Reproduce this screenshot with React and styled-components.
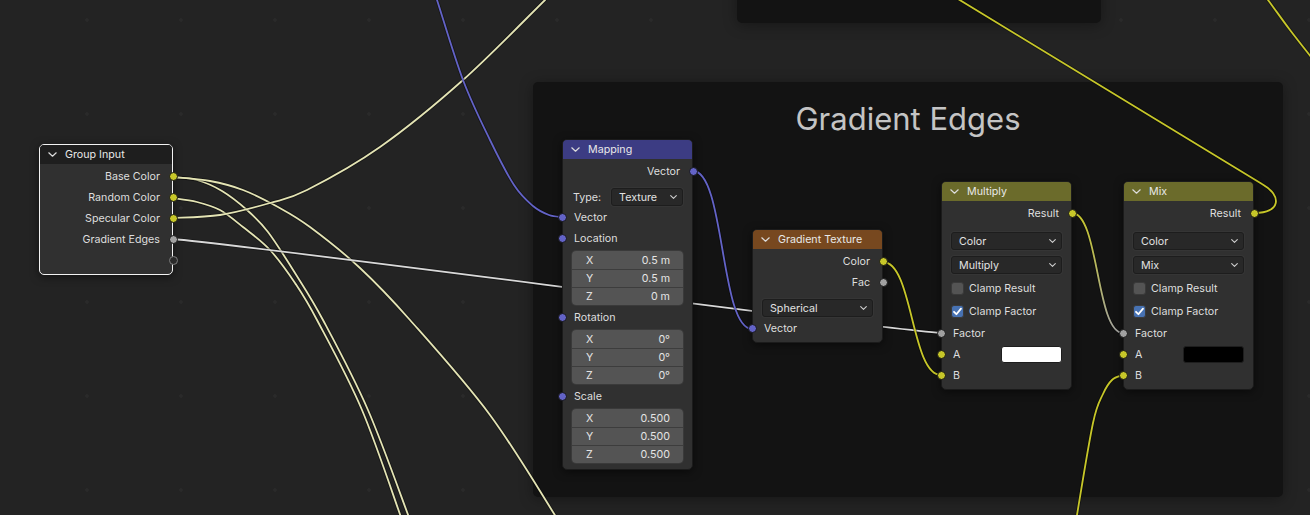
import React from "react";
import styled, { createGlobalStyle } from "styled-components";

const GlobalStyle = createGlobalStyle`
  html, body {
    margin: 0;
    padding: 0;
    background: #232323;
  }
  body {
    font-family: "Inter", "Noto Sans", sans-serif;
    -webkit-font-smoothing: antialiased;
  }
`;

const YELLOW = "#c7c729";
const GRAY = "#a1a1a1";
const BLUE = "#6363c7";

const Canvas = styled.div`
  position: relative;
  width: 1310px;
  height: 515px;
  overflow: hidden;
  background-color: #232323;
  background-image: radial-gradient(circle, #2a2a2a 1.4px, transparent 2px);
  background-size: 94px 94px;
  background-position: 134px 67px;
`;

const Frame = styled.div`
  position: absolute;
  left: ${(p) => p.$x}px;
  top: ${(p) => p.$y}px;
  width: ${(p) => p.$w}px;
  height: ${(p) => p.$h}px;
  background: #131313;
  border-radius: 5px;
  box-shadow: 0 2px 14px rgba(0, 0, 0, 0.35);
  display: flex;
  justify-content: center;
  z-index: 0;
`;

const FrameTitle = styled.div`
  margin-top: 17px;
  height: 40px;
  line-height: 40px;
  font-size: 31px;
  color: #c4c4c4;
`;

const Wires = styled.svg`
  position: absolute;
  left: 0;
  top: 0;
  z-index: 1;
  pointer-events: none;
`;

const NodeBox = styled.div`
  position: absolute;
  left: ${(p) => p.$x}px;
  top: ${(p) => p.$y}px;
  width: ${(p) => p.$w}px;
  box-sizing: border-box;
  background: #303030;
  border: 1px solid ${(p) => (p.$active ? "#f2f2f2" : "#1b1b1b")};
  border-radius: 5px;
  box-shadow: 0 2px 8px rgba(0, 0, 0, 0.5);
  padding-bottom: ${(p) => p.$pb}px;
  z-index: 2;
  color: #dedede;
  font-size: 10.7px;
`;

const Header = styled.div`
  height: 19px;
  margin-bottom: 2px;
  display: flex;
  align-items: center;
  gap: 8px;
  padding-left: 8px;
  background: ${(p) => p.$color};
  border-radius: 4px 4px 0 0;
  color: #e8e8e8;
  font-size: 10.7px;
`;

const SocketRow = styled.div`
  position: relative;
  height: ${(p) => p.$h || 21}px;
  display: flex;
  align-items: center;
  justify-content: ${(p) => (p.$out ? "flex-end" : "space-between")};
  padding: 0 ${(p) => (p.$out ? 12 : 9)}px 0 11px;
`;

const Socket = styled.span`
  position: absolute;
  top: 50%;
  ${(p) => (p.$out ? "right: -5.5px;" : "left: -5.5px;")}
  width: 9px;
  height: 9px;
  margin-top: -4.5px;
  box-sizing: border-box;
  border-radius: 50%;
  background: ${(p) => (p.$hollow ? "#2a2a2a" : p.$color)};
  border: ${(p) => (p.$hollow ? "1.5px solid #7c7c7c" : "1px solid #151515")};
`;

const PropRow = styled.div`
  display: flex;
  align-items: center;
  gap: 10px;
  margin: ${(p) => p.$mt}px 9px ${(p) => p.$mb || 0}px ${(p) => (p.$label ? 10 : 9)}px;
`;

const Dropdown = styled.div`
  flex: 1;
  height: 18px;
  box-sizing: border-box;
  display: flex;
  align-items: center;
  justify-content: space-between;
  padding: 0 5px 0 7px;
  background: #282828;
  border: 1px solid #1d1d1d;
  border-radius: 3px;
  box-shadow: 0 0 0 1px #353535;
  color: #e2e2e2;
`;

const VecGroup = styled.div`
  margin: 2px 9px 2px 9px;
  border-radius: 4px;
  overflow: hidden;
  box-shadow: 0 0 0 1px #3a3a3a;
`;

const VecField = styled.div`
  height: 18px;
  box-sizing: border-box;
  display: flex;
  align-items: center;
  justify-content: space-between;
  padding: 0 13px 0 14px;
  background: #545454;
  border-top: ${(p) => (p.$first ? "none" : "1px solid #3d3d3d")};
  color: #e4e4e4;
`;

const CheckRow = styled.div`
  height: 23px;
  display: flex;
  align-items: center;
  gap: 5px;
  padding-left: 9px;
  margin-top: ${(p) => p.$mt || 0}px;
`;

const CheckBox = styled.span`
  width: 13px;
  height: 13px;
  box-sizing: border-box;
  border-radius: 3px;
  display: flex;
  align-items: center;
  justify-content: center;
  background: ${(p) => (p.$on ? "#4772b3" : "#545454")};
  border: 1px solid #3a3a3a;
`;

const Swatch = styled.span`
  width: 61px;
  height: 17px;
  box-sizing: border-box;
  border-radius: 3px;
  background: ${(p) => p.$color};
  border: 1px solid #1e1e1e;
`;

const Chevron = () => (
  <svg width="9" height="5" viewBox="0 0 9 5">
    <polyline points="0.8,0.8 4.5,4.2 8.2,0.8" fill="none" stroke="#dcdcdc" strokeWidth="1.2" strokeLinecap="round" strokeLinejoin="round" />
  </svg>
);

const SmallChevron = () => (
  <svg width="7" height="4" viewBox="0 0 7 4">
    <polyline points="0.7,0.7 3.5,3.3 6.3,0.7" fill="none" stroke="#cfcfcf" strokeWidth="1.1" strokeLinecap="round" strokeLinejoin="round" />
  </svg>
);

const Check = () => (
  <svg width="11" height="11" viewBox="0 0 11 11">
    <polyline points="2,5.8 4.4,8.2 9,2.6" fill="none" stroke="#ffffff" strokeWidth="1.8" strokeLinecap="round" strokeLinejoin="round" />
  </svg>
);

// catmull-rom through points -> cubic bezier path
const smooth = (pts) => {
  let d = `M${pts[0][0]} ${pts[0][1]}`;
  for (let i = 0; i < pts.length - 1; i++) {
    const p0 = pts[i - 1] || pts[i];
    const p1 = pts[i];
    const p2 = pts[i + 1];
    const p3 = pts[i + 2] || p2;
    const c1 = [p1[0] + (p2[0] - p0[0]) / 6, p1[1] + (p2[1] - p0[1]) / 6];
    const c2 = [p2[0] - (p3[0] - p1[0]) / 6, p2[1] - (p3[1] - p1[1]) / 6];
    d += ` C${c1[0]} ${c1[1]} ${c2[0]} ${c2[1]} ${p2[0]} ${p2[1]}`;
  }
  return d;
};

const links = [
  { color: "#e4e4b4", d: smooth([[172, 177], [197, 180], [222, 191], [247, 210], [268, 232], [295, 273], [323, 320], [368, 410], [410, 520]]) },
  { color: "#e4e4b4", d: smooth([[172, 177], [210, 181], [243, 190], [278, 207], [310, 227], [360, 268], [410, 320], [490, 415], [558, 520]]) },
  { color: "#e4e4b4", d: smooth([[172, 198], [197, 202], [220, 210], [243, 227], [270, 250], [295, 283], [317, 320], [362, 410], [402, 520]]) },
  { color: "#e4e4b4", d: smooth([[172, 218], [220, 215], [270, 203], [307, 190], [380, 147], [463, 80], [545, 0], [560, -15]]) },
  { color: "#d8d8d8", d: "M172 239 C260 246, 850 326, 941 333" },
  { color: BLUE, d: "M693 171 C725 171, 720 329, 752 329" },
  { color: BLUE, d: smooth([[430, -20], [437, 0], [463, 80], [490, 140], [514, 185], [533, 206], [549, 215], [562, 217]]) },
  { color: YELLOW, d: "M883 262 C913 262, 911 375, 941 375" },
  { color: "url(#resultToFactor)", d: "M1072 213 C1099 213, 1096 333, 1123 333" },
  { color: YELLOW, d: smooth([[1070, 560], [1077, 515], [1093, 423], [1103, 394], [1112, 380], [1123, 375]]) },
  { color: YELLOW, d: "M1255 213 C1280 213, 1283 196, 1262 184 L 940 -12" },
  { color: YELLOW, d: smooth([[1258, -12], [1268, 0], [1290, 30], [1315, 62]]) },
];

const Output = ({ label, color }) => (
  <SocketRow $out>
    {label}
    <Socket $out $color={color} />
  </SocketRow>
);

const Input = ({ label, color, children }) => (
  <SocketRow>
    <Socket $color={color} />
    {label}
    {children}
  </SocketRow>
);

const Vec = ({ values }) => (
  <VecGroup>
    {["X", "Y", "Z"].map((axis, i) => (
      <VecField key={axis} $first={i === 0}>
        <span>{axis}</span>
        <span>{values[i]}</span>
      </VecField>
    ))}
  </VecGroup>
);

const Select = ({ label }) => (
  <Dropdown>
    <span>{label}</span>
    <SmallChevron />
  </Dropdown>
);

const MathNode = ({ x, title, mode, swatch }) => (
  <NodeBox $x={x} $y={181} $w={131} $pb={3}>
    <Header $color="#6b6b2b">
      <Chevron />
      {title}
    </Header>
    <Output label="Result" color={YELLOW} />
    <PropRow $mt={8}>
      <Select label="Color" />
    </PropRow>
    <PropRow $mt={6}>
      <Select label={mode} />
    </PropRow>
    <CheckRow $mt={3}>
      <CheckBox />
      Clamp Result
    </CheckRow>
    <CheckRow>
      <CheckBox $on>
        <Check />
      </CheckBox>
      Clamp Factor
    </CheckRow>
    <Input label="Factor" color={GRAY} />
    <Input label="A" color={YELLOW}>
      <Swatch $color={swatch} />
    </Input>
    <Input label="B" color={YELLOW} />
  </NodeBox>
);

export default function App() {
  return (
    <>
      <GlobalStyle />
      <Canvas>
        <Frame $x={737} $y={-30} $w={364} $h={53} />
        <Frame $x={533} $y={82} $w={750} $h={415}>
          <FrameTitle>Gradient Edges</FrameTitle>
        </Frame>

        <Wires width="1310" height="515" viewBox="0 0 1310 515">
          <defs>
            <linearGradient id="resultToFactor" gradientUnits="userSpaceOnUse" x1="1072" y1="213" x2="1123" y2="333">
              <stop offset="0" stopColor={YELLOW} />
              <stop offset="1" stopColor={GRAY} />
            </linearGradient>
          </defs>
          {links.map((l, i) => (
            <g key={i} fill="none" strokeLinecap="round">
              <path d={l.d} stroke="rgba(0,0,0,0.35)" strokeWidth="3.6" />
              <path d={l.d} stroke={l.color} strokeWidth="1.8" />
            </g>
          ))}
        </Wires>

        <NodeBox $x={39} $y={144} $w={134} $pb={3} $active>
          <Header $color="#1e1e1e">
            <Chevron />
            Group Input
          </Header>
          <Output label="Base Color" color={YELLOW} />
          <Output label="Random Color" color={YELLOW} />
          <Output label="Specular Color" color={YELLOW} />
          <Output label="Gradient Edges" color={GRAY} />
          <SocketRow $out>
            <Socket $out $hollow />
          </SocketRow>
        </NodeBox>

        <NodeBox $x={562} $y={139} $w={131} $pb={4}>
          <Header $color="#3c3c83">
            <Chevron />
            Mapping
          </Header>
          <Output label="Vector" color={BLUE} />
          <PropRow $mt={6} $mb={1} $label>
            <span>Type:</span>
            <Select label="Texture" />
          </PropRow>
          <Input label="Vector" color={BLUE} />
          <Input label="Location" color={BLUE} />
          <Vec values={["0.5 m", "0.5 m", "0 m"]} />
          <Input label="Rotation" color={BLUE} />
          <Vec values={["0°", "0°", "0°"]} />
          <Input label="Scale" color={BLUE} />
          <Vec values={["0.500", "0.500", "0.500"]} />
        </NodeBox>

        <NodeBox $x={752} $y={229} $w={131} $pb={3}>
          <Header $color="#77481f">
            <Chevron />
            Gradient Texture
          </Header>
          <Output label="Color" color={YELLOW} />
          <Output label="Fac" color={GRAY} />
          <PropRow $mt={6} $mb={1}>
            <Select label="Spherical" />
          </PropRow>
          <Input label="Vector" color={BLUE} />
        </NodeBox>

        <MathNode x={941} title="Multiply" mode="Multiply" swatch="#ffffff" />
        <MathNode x={1123} title="Mix" mode="Mix" swatch="#000000" />
      </Canvas>
    </>
  );
}
